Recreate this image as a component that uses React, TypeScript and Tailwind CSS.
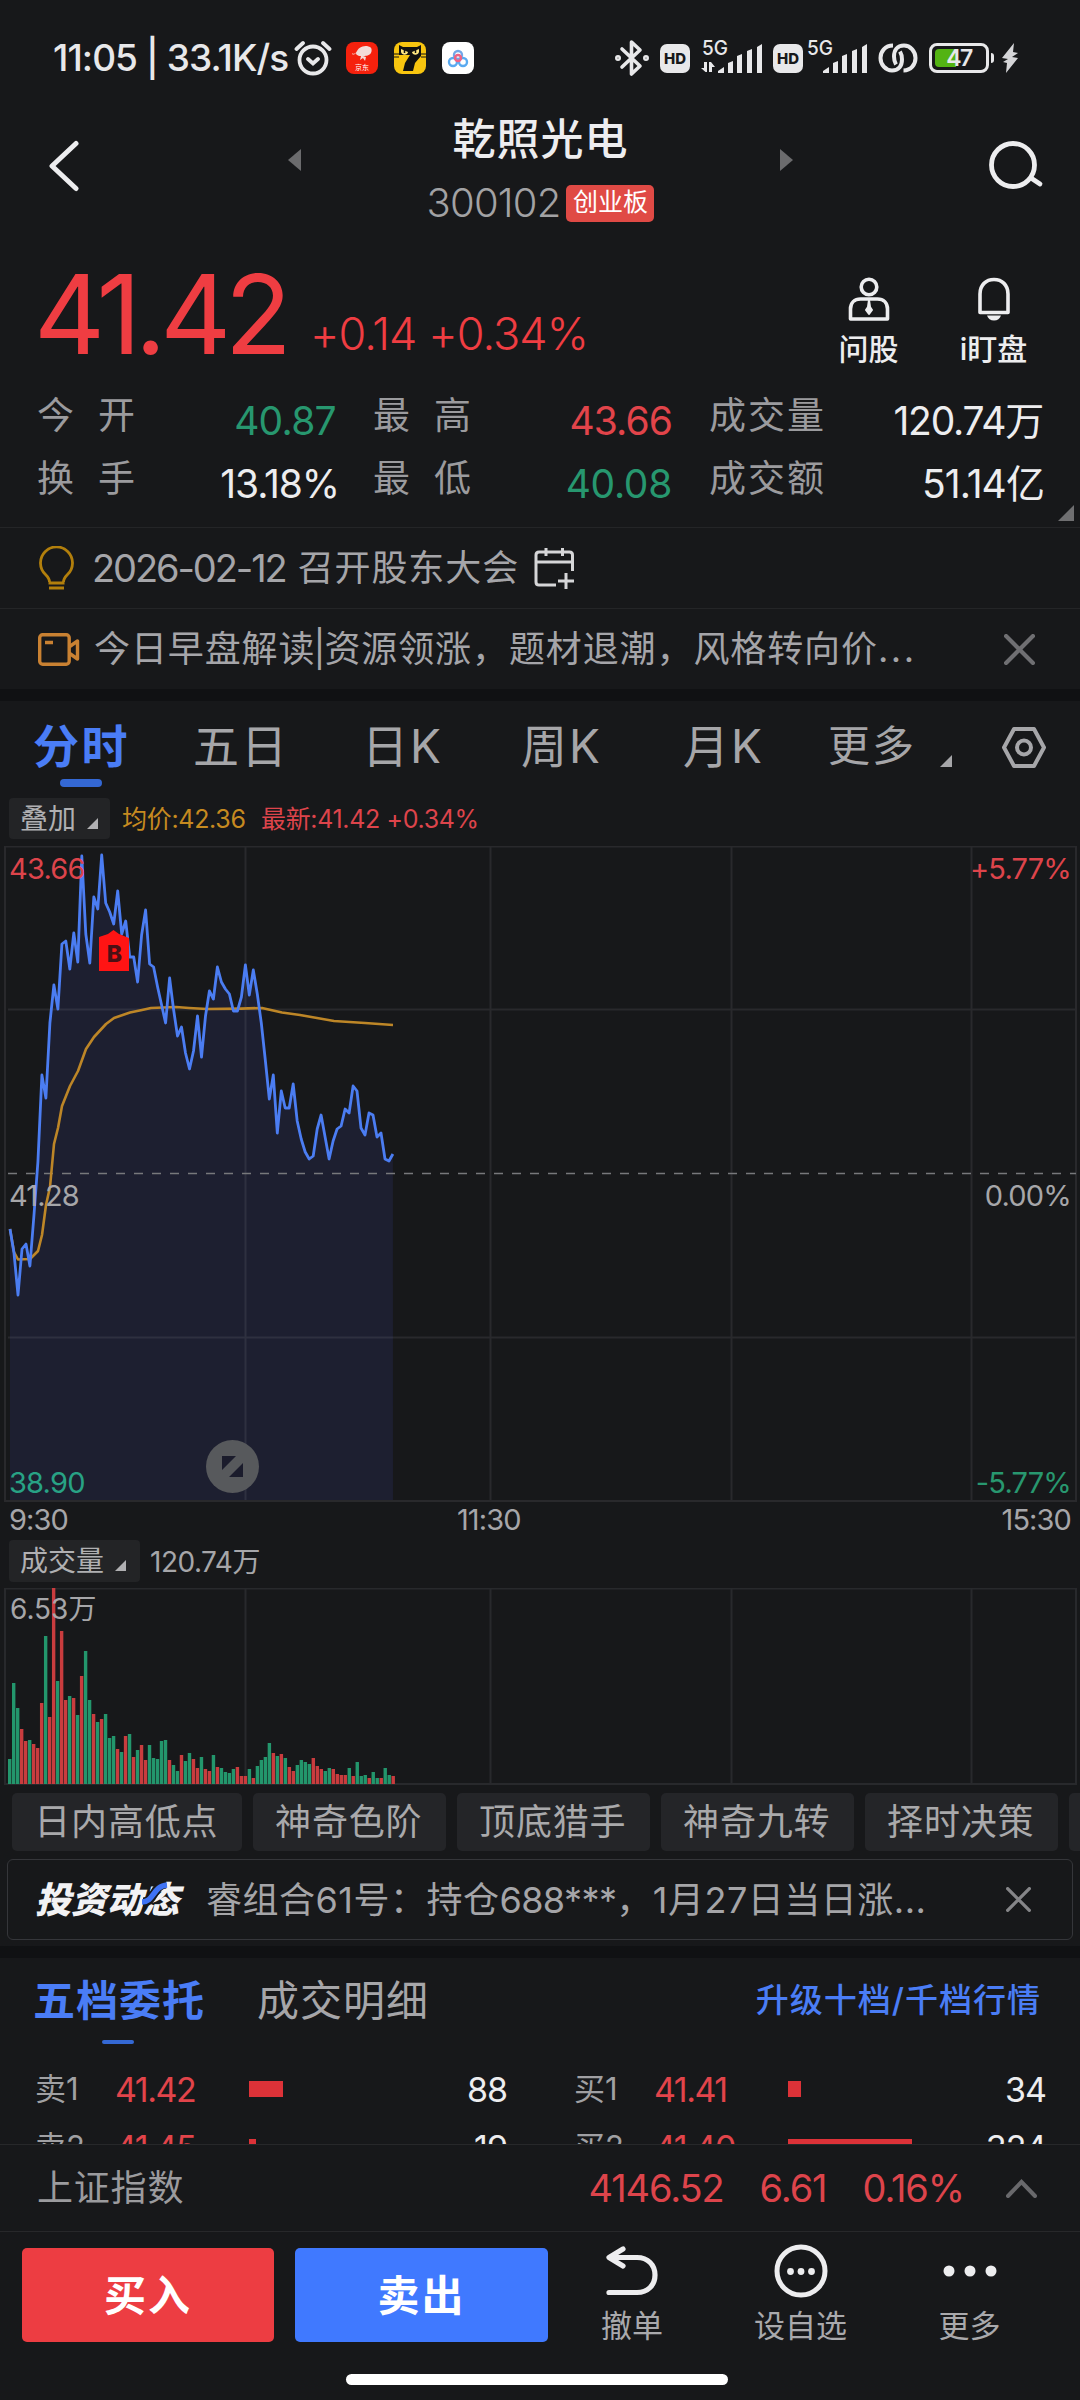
import type { ReactNode } from "react";

const openingTicks = [383, 407, 449, 403, 398, 420];

const laterTicks = [
  370, 316, 229, 252, 177, 139, 163, 98, 95, 123, 87, 116, 10, 88, 117, 51, 63, 9, 57, 66, 78, 45, 88, 75, 111, 111, 136,
  89, 64, 118, 121, 141, 159, 177, 132, 163, 190, 181, 207, 223, 205, 170, 211, 170, 145, 153, 121, 136, 143, 148, 165,
  165, 151, 119, 149, 124, 148, 177, 214, 253, 229, 287, 245, 262, 262, 238, 275, 293, 306, 313, 310, 283, 269, 291, 313,
  295, 283, 280, 263, 267, 240, 245, 282, 289, 267, 269, 291, 287, 313, 315, 308,
];

const averageLine =
  "10,383 14,406 18,413.5 30,413 38,405 42,389 46,359 50,341 54,298 58,282 62,260 70,240 78,225 86,203 94,191 106,178 114,172 130,166.5 142,164 151,162 176,161 189,162 207,163 241,162.6 262,162 282,166.5 300,169 317,172 334,175 365,177 393,179";

const volumes = [
  25, 101, 76, 55, 43, 44, 40, 36, 81, 148, 67, 196, 103, 153, 84, 88, 86, 69, 108, 133, 84, 70, 62, 65, 70, 46, 48, 35,
  32, 48, 50, 27, 34, 39, 24, 39, 26, 25, 43, 44, 24, 19, 13, 29, 23, 31, 25, 16, 27, 15, 13, 29, 17, 16, 12, 11, 15, 17,
  8, 8, 15, 6, 18, 24, 27, 41, 31, 28, 30, 26, 17, 13, 19, 24, 22, 20, 26, 18, 15, 13, 16, 15, 10, 9, 9, 16, 8, 22, 8, 9,
  6, 12, 6, 6, 16, 9, 8,
];
const volumeSides =
  "gggrrgrrrgrrgrrgrgrggrgrgggrgrgrgrrgggggrggrggrrgrrgrggggrrrgrggggrgrgrrggggrrrggrrrrgrgggrggrggr";

const pricePoints = [...openingTicks, ...laterTicks].map((y, i) => `${(10 + i * 3.989).toFixed(1)},${y}`).join(" ");

const chips = ["日内高低点", "神奇色阶", "顶底猎手", "神奇九转", "择时决策"];

function Corner({ className }: { className: string }) {
  return (
    <svg className={className} viewBox="0 0 12 12">
      <path d="M12 0V12H0Z" fill="currentColor" />
    </svg>
  );
}

function Cross({ size, className }: { size: number; className: string }) {
  return (
    <svg className={className} width={size} height={size} viewBox="0 0 30 30" fill="none">
      <path d="M2 2L28 28M28 2L2 28" stroke="currentColor" strokeWidth="4" strokeLinecap="round" />
    </svg>
  );
}

function Hd({ className }: { className: string }) {
  return (
    <span className={`flex h-[29px] w-[30px] items-center justify-center rounded-[7px] bg-[#e8e8ea] text-[15px] leading-none font-extrabold text-[#17181a] ${className}`}>
      HD
    </span>
  );
}

function Signal({ arrows }: { arrows?: boolean }) {
  return (
    <svg width="64" height="48" viewBox="0 -6 64 48" fill="#e8e8ea">
      <text x="1" y="15" fontSize="20" fontWeight="500" textLength="26" lengthAdjust="spacingAndGlyphs">5G</text>
      {arrows && <path d="M3 22h3v10H4.500L0 28h3zM8 22h2l4 5h-3v5H8z" />}
      <path d="M17 33v-2l6-4v6zM27 33V23l5-2v12zM36 33V16l5-2v19zM46 33V11l5-2v24zM56 33V7l5-3v29z" />
    </svg>
  );
}

function StatusBar() {
  return (
    <div className="flex h-[116px] items-center pl-[53px] text-[#e8e8ea]">
      <span className="w-[236px] text-[37px] font-medium tracking-[-0.930px] whitespace-nowrap">11:05 | 33.1K/s</span>
      <svg className="ml-[5px]" width="38" height="36" viewBox="0 0 38 36" fill="none" stroke="#e8e8ea" strokeWidth="3.800" strokeLinecap="round">
        <circle cx="19" cy="20" r="13.500" />
        <path d="M2.500 9L9 3M35.500 9L29 3M14 19l5 4.500 5-4.500" />
      </svg>
      <svg className="ml-[14px]" width="32" height="32" viewBox="0 0 32 32">
        <rect width="32" height="32" rx="8" fill="#f5210d" />
        <path d="M6 11c2 2 4 0 5-2 2-4 6-5 10-5l3 1c2 1 2 4 1 6-2 3-6 3-8 3l3 1-1 4-2-3-3 2 1-4c-4 0-5-2-5-3-2 2-4 2-4 0z" fill="#f3dcd8" />
        <text x="9" y="28" fontSize="7" fill="#fff">京东</text>
      </svg>
      <svg className="ml-[16px]" width="32" height="32" viewBox="0 0 32 32">
        <rect width="32" height="32" rx="8" fill="#f8c50f" />
        <path d="M5 3l4 2h14l4-2v11l-6 7-2 8H9l2-8 5-8H5z" fill="#111" />
        <path d="M0 12h5M0 15h5M27 12h5M27 15h5" stroke="#111" strokeWidth="1" />
        <path d="M7 7l7 3c0 3-6 4-7 0zM25 7l-7 3c0 3 6 4 7 0z" fill="#ffe680" />
        <path d="M10.500 8v3M21.500 8v3" stroke="#111" strokeWidth="1.500" />
      </svg>
      <svg className="ml-[16px]" width="32" height="32" viewBox="0 0 32 32" fill="none" strokeWidth="2.400">
        <rect width="32" height="32" rx="8" fill="#fff" />
        <circle cx="11" cy="20" r="4" stroke="#5aaaf0" />
        <circle cx="21" cy="20" r="4" stroke="#5aaaf0" />
        <circle cx="16" cy="13" r="4" stroke="#72a7e8" />
        <circle cx="16" cy="16" r="3" stroke="#ee6384" />
      </svg>
      <svg className="ml-[141px]" width="34" height="38" viewBox="0 0 34 38" fill="none" stroke="#e8e8ea" strokeWidth="3.600" strokeLinejoin="round" strokeLinecap="round">
        <path d="M7 10l18 17-8.500 8V3l8.500 8L7 28" />
        <circle cx="3" cy="19" r="1.200" />
        <circle cx="31" cy="19" r="1.200" />
      </svg>
      <Hd className="ml-[11px]" />
      <div className="ml-[11px]"><Signal arrows /></div>
      <Hd className="ml-[8px]" />
      <div className="ml-[3px]"><Signal /></div>
      <svg className="ml-[8px]" width="40" height="30" viewBox="0 0 40 30" fill="none" stroke="#e8e8ea" strokeWidth="4">
        <path d="M15 2.500C7 2.500 2.500 8.500 2.500 15S7.500 27.500 14 27.500c7 0 10-5 10-11 0-3-.5-5.500-2-8" />
        <path d="M25.500 27.500c7.500 0 12-6 12-12.500S32.500 2.500 26 2.500c-7 0-10 5-10 11 0 3 .5 5.500 2 8" />
      </svg>
      <div className="ml-[11px] flex h-[30px] w-[60px] items-center rounded-[8px] border-[3px] border-[#e8e8ea] p-[3px]">
        <div className="relative flex h-full w-full items-center justify-center">
          <span className="absolute left-0 h-full w-[21px] rounded-l-[4px] bg-[#53b313]" />
          <span className="relative text-[23px] leading-none font-semibold tracking-[-1.500px]">47</span>
        </div>
      </div>
      <span className="ml-[2px] h-[10px] w-[3px] rounded-r-[3px] bg-[#e8e8ea]" />
      <svg className="ml-[7px]" width="18" height="30" viewBox="0 0 18 30" fill="#d5d5d8">
        <path d="M13 0L1 15l6 1-5 3 4 1-1 10L17 15l-6-1 6-4-5-1z" />
      </svg>
    </div>
  );
}

function Header() {
  return (
    <header className="flex h-[134px] pl-[48px] text-[#ededef]">
      <svg className="mt-[24px]" width="32" height="52" viewBox="0 0 32 52" fill="none">
        <path d="M28 3.500L4 26L28 48.500" stroke="#ededef" strokeWidth="5" strokeLinecap="round" strokeLinejoin="round" />
      </svg>
      <svg className="mt-[33px] ml-[208px]" width="13" height="22" viewBox="0 0 13 22">
        <path d="M13 0V22L0 11Z" fill="#6b6b6d" />
      </svg>
      <div className="flex w-[479px] flex-col items-center">
        <h1 className="text-[43px] leading-[46px] font-medium tracking-[1px]">乾照光电</h1>
        <div className="mt-[22px] flex h-[38px] items-center">
          <span className="text-[40px] leading-none font-light tracking-[-0.800px] text-[#a2a2a4]">300102</span>
          <span className="ml-[6px] flex h-[37px] w-[88px] items-center justify-center rounded-[5px] bg-[#e04a45] text-[25px] text-white">创业板</span>
        </div>
      </div>
      <svg className="mt-[33px]" width="13" height="22" viewBox="0 0 13 22">
        <path d="M0 0V22L13 11Z" fill="#6b6b6d" />
      </svg>
      <svg className="mt-[24px] ml-[195px]" width="56" height="52" viewBox="0 0 56 52" fill="none" stroke="#ededef" strokeWidth="4.800" strokeLinecap="round">
        <circle cx="25" cy="25" r="21.500" />
        <path d="M43 38l9 6" />
      </svg>
    </header>
  );
}

function Shortcut({ label, children }: { label: string; children: ReactNode }) {
  return (
    <div className="flex w-[125px] flex-col items-center text-[#ededef]">
      {children}
      <span className="mt-[13px] text-[30px] leading-[30px] font-medium">{label}</span>
    </div>
  );
}

function Quote() {
  return (
    <section className="flex h-[138px] pl-[34px] text-[#ef3d42]">
      <span className="w-[274px] text-[110px] leading-[128px] tracking-[-6.400px]">41.42</span>
      <span className="mt-[57px] ml-[2px] w-[482px] text-[45px] leading-[54px] font-light tracking-[-0.900px] whitespace-nowrap">+0.14 +0.34%</span>
      <div className="mt-[27px] ml-[14px] flex">
        <Shortcut label="问股">
          <svg width="42" height="44" viewBox="0 0 42 44" fill="none" stroke="#ededef" strokeWidth="3.600" strokeLinejoin="round">
            <circle cx="21" cy="10" r="7.800" />
            <path d="M2.500 42V32c0-6 4-10 10-10h17c6 0 10 4 10 10v10z" />
            <path d="M21 23l-1 7-2 3 3 4 3-4-2-3z" fill="#ededef" strokeWidth="2" />
          </svg>
        </Shortcut>
        <Shortcut label="i盯盘">
          <svg width="34" height="44" viewBox="0 0 34 44" fill="none">
            <path d="M3 35.500V17C3 8 9 2.500 17 2.500S31 8 31 17v18.500z" stroke="#ededef" strokeWidth="3.600" strokeLinejoin="round" />
            <path d="M10 38.500h14c-1 3-3.500 5-7 5s-6-2-7-5z" fill="#ededef" />
          </svg>
        </Shortcut>
      </div>
    </section>
  );
}

function Stat({ label, value, tone, className, wide }: { label: string; value: string; tone: string; className: string; wide?: boolean }) {
  return (
    <div className={`flex justify-between ${className}`}>
      <span className={`text-[37px] leading-[56px] text-[#9b9b9e] ${wide ? "tracking-[2px]" : "tracking-[24px]"}`}>{label}</span>
      <span className={`mt-[5px] text-[39px] leading-[56px] ${tone}`}>{value}</span>
    </div>
  );
}

function Stats() {
  return (
    <section className="relative h-[139px] pl-[37px]">
      <div className="flex h-[63px]">
        <Stat label="今开" value="40.87" tone="tracking-[-0.700px] text-[#27976f]" className="w-[299px]" />
        <Stat label="最高" value="43.66" tone="tracking-[-0.900px] text-[#e2444a]" className="ml-[37px] w-[299px]" />
        <Stat label="成交量" value="120.74万" tone="tracking-[-1.200px] text-[#ededef]" className="ml-[37px] w-[334px]" wide />
      </div>
      <div className="flex h-[63px]">
        <Stat label="换手" value="13.18%" tone="tracking-[-1.100px] text-[#ededef]" className="w-[302px]" />
        <Stat label="最低" value="40.08" tone="tracking-[-0.300px] text-[#27976f]" className="ml-[34px] w-[299px]" />
        <Stat label="成交额" value="51.14亿" tone="tracking-[-0.900px] text-[#ededef]" className="ml-[37px] w-[335px]" wide />
      </div>
      <Corner className="absolute right-[6px] bottom-[6px] h-[16px] w-[16px] text-[#6f6f71]" />
    </section>
  );
}

function News() {
  return (
    <section className="text-[36px] text-[#a5a5a9]">
      <div className="flex h-[81px] items-center border-t border-[#242527] pl-[38px]">
        <svg width="37" height="44" viewBox="0 0 37 44" fill="none" stroke="#b27f0c" strokeWidth="2.800">
          <path d="M11.500 36c0-3-1-4.500-4-7.500a16 16 0 1 1 22 0c-3 3-4 4.500-4 7.500" />
          <path d="M10.500 37h16M11 42h15" strokeWidth="3" />
        </svg>
        <span className="ml-[17px] flex w-[442px] items-center gap-[12px] tracking-[0.900px] whitespace-nowrap">
          <span className="text-[38px] tracking-[-2.100px]">2026-02-12</span> 召开股东大会
        </span>
        <svg width="41" height="42" viewBox="0 0 41 42" fill="none" stroke="#d6d6d8" strokeWidth="3">
          <path d="M38.500 24V8c0-2-1-3-3-3H5C3 5 2 6 2 8v27c0 2 1 3 3 3h17M2 15h36.500M12 1v8M28.500 1v8M24 34h16M32 26v16" />
        </svg>
      </div>
      <div className="flex h-[81px] items-center border-t border-[#242527] pl-[38px]">
        <svg width="42" height="33" viewBox="0 0 42 33" fill="none" stroke="#c98132" strokeWidth="3.400" strokeLinejoin="round">
          <rect x="1.700" y="1.700" width="29.500" height="29.500" rx="3" />
          <path d="M31 14l8.500-6v18L31 20M7 9.500h8" />
        </svg>
        <span className="ml-[14px] w-[910px] tracking-[0.900px] whitespace-nowrap">
          今日早盘解读<span className="-ml-[2px] tracking-[-1px]">|</span>资源领涨，题材退潮，风格转向价<span className="tracking-[2.500px]">...</span>
        </span>
        <Cross size={31} className="text-[#6f6f72]" />
      </div>
      <div className="h-[12px] bg-[#101113]" />
    </section>
  );
}

function PeriodTabs() {
  return (
    <nav className="flex h-[94px] pl-[33px] text-[46px] leading-[90px] text-[#a6a6a9]">
      <div className="flex w-[160px] flex-col">
        <span className="h-[78px] text-[46px] font-bold tracking-[2.500px] text-[#4a7df6]">分时</span>
        <span className="ml-[27px] h-[8px] w-[42px] rounded-full bg-[#3468d4]" />
      </div>
      <span className="w-[169px] tracking-[2px]">五日</span>
      <span className="w-[159px] tracking-[2px]">日K</span>
      <span className="w-[162px] tracking-[2px]">周K</span>
      <span className="w-[145px] tracking-[2px]">月K</span>
      <span className="w-[112px] text-[42px] tracking-[2px]">更多</span>
      <Corner className="mt-[54px] h-[12px] w-[12px] text-[#a6a6a9]" />
      <svg className="mt-[26px] ml-[50px]" width="44" height="41" viewBox="0 0 44 41" fill="none" stroke="#a6a6a9" strokeWidth="4" strokeLinejoin="round">
        <path d="M12 2h20l10 18.500L32 39H12L2 20.500z" />
        <circle cx="22" cy="20.500" r="7" />
      </svg>
    </nav>
  );
}

function ChartLegend() {
  return (
    <div className="flex h-[51px] items-start pt-[3px] pl-[9px] text-[25px]">
      <span className="flex h-[41px] w-[101px] items-center gap-[11px] rounded-[4px] bg-[#232426] pl-[11px] text-[28px] text-[#b0b0b2]">
        叠加
        <Corner className="mt-[9px] h-[11px] w-[11px]" />
      </span>
      <span className="ml-[12px] w-[139px] leading-[43px] tracking-[-0.300px] whitespace-nowrap text-[#c68a20]">均价:42.36</span>
      <span className="leading-[43px] tracking-[-0.350px] whitespace-nowrap text-[#dd444b]">最新:41.42 +0.34%</span>
    </div>
  );
}

function PriceChart() {
  return (
    <div className="relative h-[656px] text-[29px] leading-[30px] tracking-[-0.800px]">
      <svg width="1080" height="656" viewBox="0 0 1080 656" fill="none">
        <polygon points={`10,654 ${pricePoints} 393,654`} fill="#1d1f30" />
        <path d="M5 .5H1076V655H5zM245.500 0V655M490.500 0V655M731.500 0V655M971.500 0V655M8 163.500H1076M8 491.500H1076" stroke="#a0a0a8" strokeOpacity="0.130" strokeWidth="2" />
        <path d="M8 327.500H1076" stroke="#77787b" strokeWidth="1.300" strokeDasharray="9 9" />
        <polyline points={averageLine} stroke="#bd8627" strokeWidth="2.600" strokeLinejoin="round" />
        <polyline points={pricePoints} stroke="#4b7df2" strokeWidth="2.800" strokeLinejoin="round" />
        <path d="M99 125v-34l9-3 5.500-4 5.500 4 10 4v33z" fill="#ff1414" />
        <text x="114" y="116" fontSize="23" fontWeight="800" fill="#4a1015" textAnchor="middle">B</text>
        <circle cx="232.500" cy="620.500" r="26.500" fill="#57595c" />
        <path d="M222 610h14l-14 14zM243 617v14h-14z" fill="#1b1c2c" />
      </svg>
      <span className="absolute top-[8px] left-[9px] text-[#dd444b]">43.66</span>
      <span className="absolute top-[335px] left-[9px] text-[#a6a6a9]">41.28</span>
      <span className="absolute top-[622px] left-[9px] text-[#28a285]">38.90</span>
      <span className="absolute top-[8px] right-[9px] text-[#dd444b]">+5.77%</span>
      <span className="absolute top-[335px] right-[9px] text-[#a6a6a9]">0.00%</span>
      <span className="absolute top-[622px] right-[9px] text-[#28976f]">-5.77%</span>
    </div>
  );
}

function VolumeChart() {
  return (
    <>
      <div className="flex h-[38px] items-start justify-between pr-[9px] pl-[9px] text-[29px] leading-[36px] tracking-[-0.900px] text-[#a6a6a9]">
        <span>9:30</span>
        <span className="mr-[92px]">11:30</span>
        <span>15:30</span>
      </div>
      <div className="flex h-[48px] items-start pl-[9px] text-[28px] text-[#b0b0b2]">
        <span className="flex h-[42px] w-[131px] items-center gap-[11px] rounded-[4px] bg-[#232426] pl-[11px]">
          成交量
          <Corner className="mt-[9px] h-[11px] w-[11px]" />
        </span>
        <span className="ml-[10px] leading-[44px] tracking-[-0.500px] text-[#a6a6a9]">120.74万</span>
      </div>
      <div className="relative h-[197px]">
        <svg width="1080" height="197" viewBox="0 0 1080 197" fill="none">
          <path d="M5 .5H1076V196H5zM245.500 0V196M490.500 0V196M731.500 0V196M971.500 0V196" stroke="#28292c" strokeWidth="2" />
          {volumes.map((v, i) => (
            <rect key={i} x={8 + i * 3.995} y={196 - v} width="3.400" height={v} fill={volumeSides[i] === "r" ? "#c93c3e" : "#23966c"} />
          ))}
        </svg>
        <span className="absolute top-[6px] left-[10px] text-[28px] leading-[30px] text-[#a6a6a9]">6.53万</span>
      </div>
    </>
  );
}

function Chips() {
  return (
    <div className="flex h-[74px] gap-[11px] overflow-hidden pt-[8px] pl-[12px] text-[36px] leading-[59px] tracking-[0.800px] text-[#a9a9ab]">
      {chips.map((chip) => (
        <span className="h-[58px] shrink-0 rounded-[5px] bg-[#242528] pr-[23.500px] pl-[22.300px]" key={chip}>{chip}</span>
      ))}
      <span className="h-[58px] w-[40px] shrink-0 rounded-[5px] bg-[#242528]" />
    </div>
  );
}

function Notice() {
  return (
    <div className="mx-[7px] flex h-[81px] items-center rounded-[6px] border border-[#35363a] pl-[27px]">
      <span className="relative w-[152px] text-[36px] font-black whitespace-nowrap text-[#f2f2f4] italic">
        投资动态
        <svg className="absolute top-[8px] left-[106px]" width="28" height="26" viewBox="0 0 28 26" fill="none">
          <path d="M2 21c12 0 10-17 23-18" stroke="#17181a" strokeWidth="9" />
          <path d="M1 21c12 0 11-16 25-17" stroke="#3f73f5" strokeWidth="5.500" />
        </svg>
      </span>
      <span className="ml-[19px] w-[800px] text-[36px] tracking-[0.500px] whitespace-nowrap text-[#a5a5a8]">
        睿组合61号：持仓<span className="tracking-[-0.600px]">688***</span>，1月27日当日涨...
      </span>
      <Cross size={25} className="text-[#858588]" />
    </div>
  );
}

function Level({ side, price, width, volume, className }: { side: string; price: string; width: number; volume: string; className: string }) {
  return (
    <div className={`flex h-[58px] w-[540px] items-center text-[34px] ${className}`}>
      <span className="w-[80px] text-[31px] text-[#a0a0a3]">{side}</span>
      <span className="w-[134px] tracking-[-1.500px] text-[#e2444a]">{price}</span>
      <span className="h-[16px] bg-[#dd3238]" style={{ width }} />
      <span className="ml-auto tracking-[-1px] text-[#ededef]">{volume}</span>
    </div>
  );
}

function OrderBook() {
  return (
    <section className="h-[198px] overflow-hidden border-t-[12px] border-[#101113]">
      <div className="flex h-[102px] pr-[39px] pl-[33px] text-[42px] leading-[85px] tracking-[1px]">
        <div className="flex w-[224px] flex-col">
          <span className="h-[82px] font-bold text-[#4a7df6]">五档委托</span>
          <span className="ml-[69px] h-[4px] w-[32px] rounded-full bg-[#3468d4]" />
        </div>
        <span className="text-[#a6a6a9]">成交明细</span>
        <span className="ml-auto text-[33px] font-medium text-[#4a7df6]">升级十档/千档行情</span>
      </div>
      <div className="flex">
        <div className="w-[540px]">
          <Level side="卖1" price="41.42" width={34} volume="88" className="pr-[33px] pl-[35px]" />
          <Level side="卖2" price="41.45" width={7} volume="19" className="pr-[33px] pl-[35px]" />
        </div>
        <span className="mt-[18px] w-px bg-[#333437]" />
        <div>
          <Level side="买1" price="41.41" width={13} volume="34" className="pr-[34px] pl-[34px]" />
          <Level side="买2" price="41.40" width={124} volume="324" className="pr-[34px] pl-[34px]" />
        </div>
      </div>
    </section>
  );
}

function IndexBar() {
  return (
    <div className="flex h-[87px] items-center border-t border-[#27282a] pl-[37px] text-[38px] tracking-[-1.100px] text-[#dd444b]">
      <span className="mr-auto text-[36px] tracking-[0.800px] text-[#9b9b9e]">上证指数</span>
      <span>4146.52</span>
      <span className="ml-[36px]">6.61</span>
      <span className="ml-[36px]">0.16%</span>
      <svg className="mr-[43px] ml-[42px]" width="31" height="19" viewBox="0 0 31 19" fill="none">
        <path d="M2 17L15.500 3L29 17" stroke="#69696c" strokeWidth="4" strokeLinecap="round" />
      </svg>
    </div>
  );
}

function Action({ label, className, children }: { label: string; className: string; children: ReactNode }) {
  return (
    <div className={`flex flex-col items-center ${className}`}>
      <div className="flex h-[78px] items-center">{children}</div>
      <span className="text-[31px] leading-[32px] text-[#a9a9ac]">{label}</span>
    </div>
  );
}

function TradeBar() {
  return (
    <footer className="border-t border-[#27282a]">
      <div className="flex h-[142px] pl-[22px] text-[42px] font-bold text-white">
        <button className="mt-[16px] h-[94px] w-[252px] rounded-[5px] bg-[#ed3d42] tracking-[2px]">买入</button>
        <button className="mt-[16px] ml-[21px] h-[94px] w-[253px] rounded-[5px] bg-[#4079ff] tracking-[2px]">卖出</button>
        <div className="flex font-normal">
          <Action label="撤单" className="w-[168px]">
            <svg width="52" height="50" viewBox="0 0 52 50" fill="none" stroke="#ededef" strokeWidth="5.200" strokeLinecap="round" strokeLinejoin="round">
              <path d="M17 3L3 11.500L17 20M4 11.500H31C42 11.500 49 19 49 29S42 46.500 31 46.500H3" />
            </svg>
          </Action>
          <Action label="设自选" className="w-[169px]">
            <svg width="54" height="54" viewBox="0 0 54 54" fill="#ededef">
              <circle cx="27" cy="27" r="24" fill="none" stroke="#ededef" strokeWidth="5" />
              <circle cx="16.500" cy="27.500" r="3.400" />
              <circle cx="27" cy="27.500" r="3.400" />
              <circle cx="37.500" cy="27.500" r="3.400" />
            </svg>
          </Action>
          <Action label="更多" className="w-[169px]">
            <svg width="54" height="12" viewBox="0 0 54 12" fill="#ededef">
              <circle cx="6" cy="6" r="5.500" />
              <circle cx="27" cy="6" r="5.500" />
              <circle cx="48" cy="6" r="5.500" />
            </svg>
          </Action>
        </div>
      </div>
      <div className="mx-auto w-[382px] -translate-x-[3px] rounded-full bg-white pt-[11px]" />
    </footer>
  );
}

export default function App() {
  return (
    <div className="h-[2400px] w-[1080px] overflow-hidden bg-[#17181a] font-['Inter','Noto_Sans_CJK_SC',sans-serif]">
      <StatusBar />
      <Header />
      <Quote />
      <Stats />
      <News />
      <PeriodTabs />
      <ChartLegend />
      <PriceChart />
      <VolumeChart />
      <Chips />
      <Notice />
      <div className="h-[6px]" />
      <OrderBook />
      <IndexBar />
      <TradeBar />
    </div>
  );
}
